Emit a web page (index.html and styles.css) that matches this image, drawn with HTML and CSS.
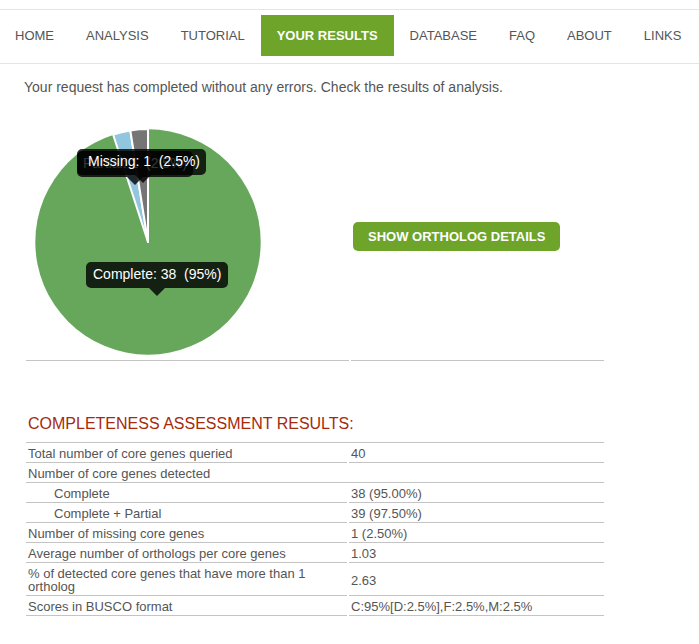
FILE: index.html
```html
<!DOCTYPE html>
<html lang="en">
<head>
<meta charset="utf-8">
<title>Completeness assessment</title>
<link rel="stylesheet" href="styles.css">
</head>
<body>
<nav class="menu" aria-label="Main">
  <a href="#">HOME</a>
  <a href="#">ANALYSIS</a>
  <a href="#">TUTORIAL</a>
  <a href="#" class="active" aria-current="page">YOUR RESULTS</a>
  <a href="#">DATABASE</a>
  <a href="#">FAQ</a>
  <a href="#">ABOUT</a>
  <a href="#">LINKS</a>
</nav>
<main class="content">
  <p class="message">Your request has completed without any errors. Check the results of analysis.</p>
  <section class="summary">
    <div class="chart-cell">
      <svg class="pie" width="244" height="240" viewBox="26 120 244 240" role="img" aria-label="Core gene completeness">
        <circle cx="148" cy="242" r="112.7" fill="#67a75c"/>
        <g stroke="#fff" stroke-width="2" stroke-linejoin="round">
          <path d="M148 242L113.1 134.5A113 113 0 0 1 130.3 130.4Z" fill="#92c5de"/>
          <path d="M148 242L130.3 130.4A113 113 0 0 1 148 129Z" fill="#757575"/>
        </g>
        <g class="tip">
          <path d="M91 262H223A5 5 0 0 1 228 267V283A5 5 0 0 1 223 288H165L157 296L149 288H91A5 5 0 0 1 86 283V267A5 5 0 0 1 91 262Z"/>
          <text x="93" y="279">Complete: 38  (95%)</text>
        </g>
        <g class="tip">
          <path d="M82 151H188A5 5 0 0 1 193 156V172A5 5 0 0 1 188 177H143L135 185L127 177H82A5 5 0 0 1 77 172V156A5 5 0 0 1 82 151Z"/>
          <text x="83" y="168">Partial: 1  (2.5%)</text>
        </g>
        <g class="tip">
          <path d="M82 149H201A5 5 0 0 1 206 154V170A5 5 0 0 1 201 175H151L143 183L135 175H82A5 5 0 0 1 77 170V154A5 5 0 0 1 82 149Z"/>
          <text x="88" y="166">Missing: 1  (2.5%)</text>
        </g>
      </svg>
    </div>
    <div class="action-cell"><button type="button">SHOW ORTHOLOG DETAILS</button></div>
  </section>
  <table class="results">
    <colgroup><col class="label-col"><col class="value-col"></colgroup>
    <thead><tr><th colspan="2">COMPLETENESS ASSESSMENT RESULTS:</th></tr></thead>
    <tbody>
      <tr><td>Total number of core genes queried</td><td>40</td></tr>
      <tr><td colspan="2">Number of core genes detected</td></tr>
      <tr><td class="sub">Complete</td><td>38 (95.00%)</td></tr>
      <tr><td class="sub">Complete + Partial</td><td>39 (97.50%)</td></tr>
      <tr><td>Number of missing core genes</td><td>1 (2.50%)</td></tr>
      <tr><td>Average number of orthologs per core genes</td><td>1.03</td></tr>
      <tr><td>% of detected core genes that have more than 1 ortholog</td><td>2.63</td></tr>
      <tr><td>Scores in BUSCO format</td><td>C:95%[D:2.5%],F:2.5%,M:2.5%</td></tr>
    </tbody>
  </table>
</main>
</body>
</html>
```
FILE: styles.css
```css
* { box-sizing: border-box; }
body {
  margin: 0;
  padding-top: 9px;
  background: #fff;
  color: #555;
  font: 13px/13px "Liberation Sans", Arial, sans-serif;
}
.menu {
  display: flex;
  padding: 5px 0 7px;
  border-top: 1px solid #e5e5e5;
  border-bottom: 1px solid #e5e5e5;
}
.menu a {
  padding: 14px 16px;
  color: #555;
  text-decoration: none;
  white-space: nowrap;
}
.menu a:first-child { padding-left: 15px; }
.menu a.active {
  background: #6da429;
  color: #fff;
  font-weight: bold;
}
.content {
  max-width: 630px;
  padding: 0 24px;
}
.message {
  margin: 14px 0 23px;
  font-size: 14px;
  line-height: 19px;
}
.summary {
  display: grid;
  grid-template-columns: 323fr 253fr;
  gap: 2px;
  margin: 0 2px;
}
.summary > div {
  border-bottom: 1px solid #c4c4c4;
}
.pie { display: block; }
.tip path { fill: #000; fill-opacity: .8; }
.tip text { fill: #fff; font-size: 14px; white-space: pre; }
.action-cell {
  display: flex;
  align-items: center;
  padding: 0 2px 8px;
}
.action-cell button {
  height: 29px;
  padding: 0 15px;
  border: 0;
  border-radius: 5px;
  background: #6da429;
  color: #fff;
  font: bold 13px "Liberation Sans", Arial, sans-serif;
}
.results {
  width: 100%;
  margin-top: 50px;
  border-collapse: separate;
  border-spacing: 2px 0;
  table-layout: fixed;
}
.label-col { width: 321px; }
.results td {
  padding: 4px 2px 2px;
  border-bottom: 1px solid #c4c4c4;
}
.results td.sub { padding-left: 28px; }
.results th {
  padding: 3px 2px 9px;
  border-bottom: 1px solid #c4c4c4;
  color: #a52a0c;
  font-size: 16px;
  font-weight: normal;
  line-height: 19px;
  text-align: left;
}
```
